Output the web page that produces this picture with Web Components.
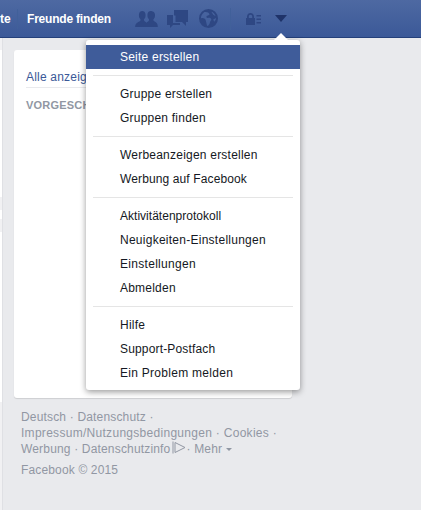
<!DOCTYPE html>
<html>
<head>
<meta charset="utf-8">
<style>
  html, body { margin: 0; height: 100%; }
  body { background: #e9eaed; font: 12px "Liberation Sans", Arial, sans-serif; overflow: hidden; width: 421px; height: 510px; position: relative; }
</style>
</head>
<body>
<fb-header></fb-header>
<fb-page>
  <fb-card slot="main"></fb-card>
  <fb-footer slot="main"></fb-footer>
</fb-page>
<fb-menu>
  <fb-item active>Seite erstellen</fb-item>
  <fb-sep></fb-sep>
  <fb-item>Gruppe erstellen</fb-item>
  <fb-item>Gruppen finden</fb-item>
  <fb-sep></fb-sep>
  <fb-item>Werbeanzeigen erstellen</fb-item>
  <fb-item style="letter-spacing:.12px">Werbung auf Facebook</fb-item>
  <fb-sep></fb-sep>
  <fb-item style="letter-spacing:.02px">Aktivitätenprotokoll</fb-item>
  <fb-item style="letter-spacing:.26px">Neuigkeiten-Einstellungen</fb-item>
  <fb-item style="letter-spacing:.3px">Einstellungen</fb-item>
  <fb-item>Abmelden</fb-item>
  <fb-sep></fb-sep>
  <fb-item>Hilfe</fb-item>
  <fb-item style="letter-spacing:.16px">Support-Postfach</fb-item>
  <fb-item style="letter-spacing:.28px">Ein Problem melden</fb-item>
</fb-menu>
<script>
class FbHeader extends HTMLElement {
  constructor() {
    super();
    this.attachShadow({ mode: 'open' });
    this.shadowRoot.innerHTML = `
      <style>
        :host { display: flex; align-items: center; height: 37px; border-bottom: 1px solid #24407a; background: linear-gradient(#4e69a2, #3b5998); color: #fff; font-weight: bold; font-size: 12px; overflow: hidden; }
        .te { width: 17px; height: 20px; line-height: 20px; border-right: 1px solid #41609a; flex: none; }
        .find { margin-left: 9px; width: 108px; letter-spacing: -.2px; flex: none; }
        svg { display: block; fill: #2e4783; flex: none; }
        .bar { width: 1px; height: 22px; background: #41609a; margin: 0 15px 0 12px; flex: none; }
      </style>
      <span class="te">te</span>
      <span class="find">Freunde finden</span>
      <svg width="23" height="17" viewBox="0 0 24 18" style="margin-right:9px"><path d="M0 18c0-4 3-5 5-6 1-1 1-2 0-3-1-1-1-3-1-4 0-3 2-4 3.500-4S11 2 11 5c0 1 0 3-1 4-1 1-1 2 0 3 1 .5 1.500 1 2 1.500.5-.5 1-1 2-1.500 1-1 1-2 0-3-1-1-1-3-1-4 0-3 2-4 3.500-4S21 2 21 5c0 1 0 3-1 4-1 1-1 2 0 3 2 1 4 2 4 6H0z"/></svg>
      <svg width="21" height="18" viewBox="0 0 21 18" style="margin-right:11px"><path d="M7 0h14v12h-2v4l-4-4H8.500V5.500H7z"/><path d="M0 5h6v8h7v2H6l-3 3v-3H0z"/></svg>
      <svg width="19" height="19" viewBox="0 0 20 20"><path fill-rule="evenodd" d="M10 0a10 10 0 1 1 0 20 10 10 0 0 1 0-20zM5.500 3.500A8 8 0 0 0 2 10c2-1 4 0 5 1.500l1.500 6.300c2 0 3-2.800 3-3.800 1-2 2.500-2.500.5-4.500-1-1-3 .5-4-.5-1-2 2-2 3-3 .5-2-3-3.500-6.500-2.500zM13 3l2 3 2.500 1.500C16.500 5.500 15 3.500 13 3zM15 11l1 2.500 1.500-2 .5-2z"/></svg>
      <span class="bar"></span>
      <svg width="15" height="12" viewBox="0 0 15 12"><path fill-rule="evenodd" d="M0 5h1V3.500C1 1 3 0 4.500 0S8 1 8 3.500V5h1v7H0zM2.800 5h3.400V3.500c0-1-.7-1.800-1.700-1.800s-1.700.8-1.700 1.800z"/><path d="M10.500 2H15v1.500h-4.500zM10.500 5.500H15V7h-4.500zM10.500 9H15v1.500h-4.500z"/></svg>
      <svg width="12" height="7" viewBox="0 0 12 7" style="margin-left:14px"><path d="M0 0h12L6 7z" fill="#1f3369"/></svg>
    `;
  }
}

class FbPage extends HTMLElement {
  constructor() {
    super();
    this.attachShadow({ mode: 'open' });
    this.shadowRoot.innerHTML = `
      <style>
        :host { display: flex; height: 472px; }
        .left { width: 2px; flex: none; background: #f1f1f3; box-shadow: 1px 0 0 #dfe0e4; }
        .left div { background: #fff; height: 147px; margin-top: 12px; }
        .left div + div { height: 9px; margin-top: 13px; }
        .left div + div + div { height: 170px; }
        .main { width: 278px; margin: 12px 0 0 12px; }
      </style>
      <div class="left"><div></div><div></div><div></div></div>
      <div class="main"><slot name="main"></slot></div>
    `;
  }
}

class FbCard extends HTMLElement {
  constructor() {
    super();
    this.attachShadow({ mode: 'open' });
    this.shadowRoot.innerHTML = `
      <style>
        :host { display: block; height: 348px; background: #fff; border-radius: 3px; box-shadow: 0 1px 1px rgba(0,0,0,.12); padding: 20px 12px 0; box-sizing: border-box; }
        .link { color: #3b5998; height: 15px; line-height: 15px; padding-bottom: 2px; border-bottom: 1px solid #e9eaed; white-space: nowrap; letter-spacing: .2px; }
        .head { color: #9197a3; font-weight: bold; font-size: 11px; margin-top: 11px; white-space: nowrap; letter-spacing: .2px; }
      </style>
      <div class="link">Alle anzeig</div>
      <div class="head">VORGESCH</div>
    `;
  }
}

class FbFooter extends HTMLElement {
  constructor() {
    super();
    this.attachShadow({ mode: 'open' });
    this.shadowRoot.innerHTML = `
      <style>
        :host { display: block; color: #9197a3; font-size: 12px; line-height: 16px; padding: 11px 7px 0; letter-spacing: .17px; white-space: nowrap; }
        .wide { letter-spacing: .29px; }
        .copy { margin-top: 5px; letter-spacing: .15px; }
        svg { vertical-align: -1px; margin: 0 -3px 0 -2px; }
        .caret { display: inline-block; border: 3px solid transparent; border-top-color: #9197a3; border-bottom: 0; vertical-align: 2px; }
      </style>
      <div>Deutsch · Datenschutz ·</div>
      <div class="wide">Impressum/Nutzungsbedingungen · Cookies ·</div>
      <div>Werbung · Datenschutzinfo <svg width="14" height="13" viewBox="0 0 14 13" fill="none" stroke="#9197a3"><path d="M1 .5v12M3 1.500 13 6.500 3 11.500z"/></svg> · Mehr <span class="caret"></span></div>
      <div class="copy">Facebook © 2015</div>
    `;
  }
}

class FbMenu extends HTMLElement {
  constructor() {
    super();
    this.attachShadow({ mode: 'open' });
    this.shadowRoot.innerHTML = `
      <style>
        :host { display: block; position: absolute; left: 86px; top: 40px; width: 214px; padding: 5px 0; box-sizing: border-box; background: #fff; border-radius: 3px; box-shadow: 0 2px 6px rgba(0,0,0,.4); }
        .nub { position: absolute; left: 188px; top: -7px; width: 0; height: 0; border: 7px solid transparent; border-top: 0; border-bottom: 7px solid #fff; }
      </style>
      <span class="nub"></span>
      <slot></slot>
    `;
  }
}

class FbItem extends HTMLElement {
  constructor() {
    super();
    this.attachShadow({ mode: 'open' });
    this.shadowRoot.innerHTML = `
      <style>
        :host { display: block; height: 24px; line-height: 24px; padding-left: 34px; color: #141823; white-space: nowrap; letter-spacing: .22px; }
        :host([active]) { background: #3f5c9a; color: #fff; }
      </style>
      <slot></slot>
    `;
  }
}

class FbSep extends HTMLElement {
  constructor() {
    super();
    this.attachShadow({ mode: 'open' });
    this.shadowRoot.innerHTML = `
      <style>
        :host { display: block; height: 1px; margin: 6px 7px; background: #e5e5e5; }
      </style>
    `;
  }
}

customElements.define('fb-header', FbHeader);
customElements.define('fb-page', FbPage);
customElements.define('fb-card', FbCard);
customElements.define('fb-footer', FbFooter);
customElements.define('fb-menu', FbMenu);
customElements.define('fb-item', FbItem);
customElements.define('fb-sep', FbSep);
</script>
</body>
</html>
